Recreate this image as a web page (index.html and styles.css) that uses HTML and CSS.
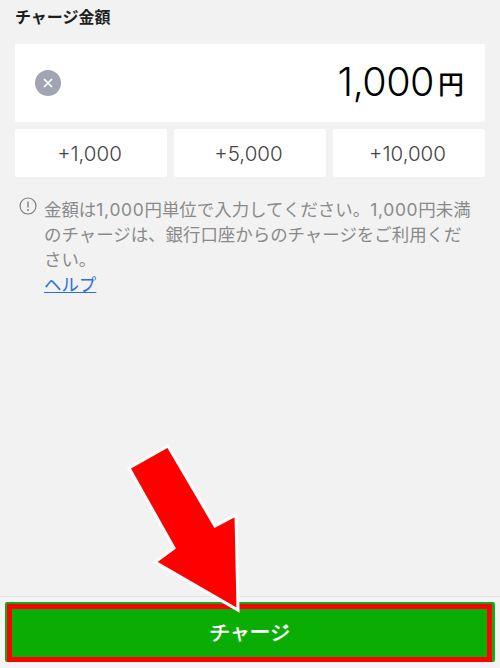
FILE: index.html
```html
<!DOCTYPE html>
<html lang="ja">
<head>
<meta charset="utf-8">
<title>チャージ金額</title>
<link rel="stylesheet" href="styles.css">
</head>
<body>
<main class="page">
  <section class="content">
    <h1 class="heading">チャージ金額</h1>
    <div class="amount-card">
      <span class="clear-btn">
        <svg class="clear-icon" viewBox="0 0 26 26" width="26" height="26"><circle cx="13" cy="13" r="13" fill="#a0a5b1"/><path d="M9 9l8 8M17 9l-8 8" stroke="#fff" stroke-width="1.7" fill="none"/></svg>
      </span>
      <span class="amount"><span class="amount-num">1,000</span><span class="amount-unit">円</span></span>
    </div>
    <div class="quick-row">
      <button class="quick-btn">+1,000</button>
      <button class="quick-btn">+5,000</button>
      <button class="quick-btn">+10,000</button>
    </div>
    <div class="notice">
      <svg class="notice-icon" viewBox="0 0 18 18" width="18" height="18"><circle cx="9" cy="9" r="8" fill="none" stroke="#777" stroke-width="1.1"/><path d="M9 4.5v6" stroke="#777" stroke-width="1.3" fill="none"/><circle cx="9" cy="13" r="0.9" fill="#777"/></svg>
      <p class="notice-text">金額は<span class="num">1,000</span>円単位で入力してください。<span class="num">1,000</span>円未満のチャージは、銀行口座からのチャージをご利用ください。<br><a class="help-link" href="#">ヘルプ</a></p>
    </div>
  </section>
  <footer class="footer">
    <button class="charge-btn"><span class="charge-label">チャージ</span></button>
  </footer>
</main>
<svg class="arrow" viewBox="0 0 500 668" width="500" height="668"><polygon points="168,446 129,468 174,548 155,562 238,610 236,515 215,526" fill="#ff0000" stroke="#fff" stroke-width="3" stroke-linejoin="miter"/></svg>
</body>
</html>
```
FILE: styles.css
```css
* { box-sizing: border-box; }
html, body { margin: 0; padding: 0; }
body {
  width: 500px;
  height: 668px;
  overflow: hidden;
  background: #f2f2f2;
  font-family: Inter, "Noto Sans CJK JP", sans-serif;
  position: relative;
}
.page { display: flex; flex-direction: column; height: 668px; }
.content { flex: 1; padding: 0 15px; }
.heading {
  margin: 0;
  padding-top: 7px;
  height: 44px;
  font-size: 16px;
  line-height: 20px;
  font-weight: 700;
  color: #1e1e1e;
}
.amount-card {
  height: 78px;
  background: #fff;
  border-radius: 2px;
  display: flex;
  align-items: center;
  justify-content: space-between;
  padding: 0 21px 3px 20px;
}
.clear-btn { display: flex; margin-top: 3px; }
.amount { display: block; color: #000; white-space: nowrap; }
.amount-num { font-size: 39.5px; font-weight: 300; letter-spacing: -0.5px; }
.amount-unit { font-size: 26px; margin-left: 4px; font-weight: 500; vertical-align: 2px; }
.quick-row { display: grid; grid-template-columns: repeat(3, 152px); gap: 7px; margin-top: 7px; }
.quick-btn {
  height: 48px;
  border: 0;
  padding: 0 3px 0 0;
  background: #fff;
  border-radius: 2px;
  font-family: inherit;
  font-size: 20.5px;
  font-weight: 300;
  color: #444;
}
.notice { display: flex; gap: 7px; margin-top: 20px; padding-left: 4px; }
.notice-icon { flex: none; }
.notice-text {
  margin: 0;
  font-size: 17.45px;
  line-height: 25px;
  color: #8a8a8a;
  font-weight: 400;
  width: 430px;
}
.num { letter-spacing: 0.7px; }
.help-link { color: #2c6fd6; text-decoration: underline; }
.footer {
  height: 72px;
  border-top: 1px solid #e4e4e4;
  background: #f4f4f4;
  padding: 5px;
}
.charge-btn {
  display: block;
  width: 490px;
  height: 60px;
  padding: 2px 3px 0 2px;
  border: 0;
  border-radius: 2px;
  background: #0db014;
}
.charge-label {
  display: flex;
  align-items: center;
  justify-content: center;
  width: 100%;
  height: 100%;
  border: 5px solid #f00;
  padding-bottom: 2px;
  background: #0aad03;
  color: #fff;
  font-family: inherit;
  font-size: 19.6px;
  font-weight: 700;
}
.arrow { position: absolute; left: 0; top: 0; pointer-events: none; }
```
